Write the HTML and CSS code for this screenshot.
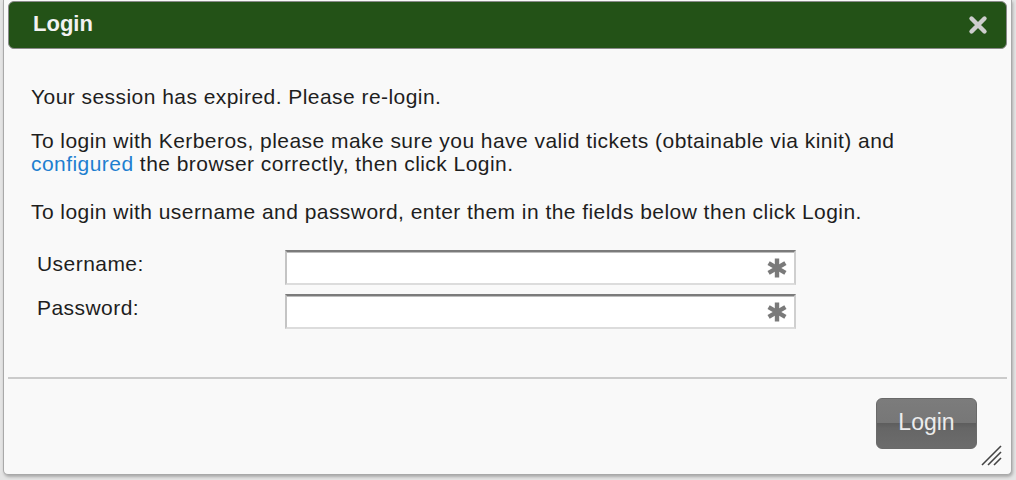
FILE: index.html
```html
<!DOCTYPE html>
<html>
<head>
<meta charset="utf-8">
<link rel="stylesheet" href="styles.css">
</head>
<body>
<div class="dialog">
  <div class="titlebar">
    <span class="title">Login</span>
    <svg class="close" width="20" height="20" viewBox="0 0 20 20"><path d="M3.5 3.5 L16.5 16.5 M16.5 3.5 L3.5 16.5" stroke="#cdcdcd" stroke-width="4.4" stroke-linecap="round"/></svg>
  </div>
  <div class="content">
    <p class="p1">Your session has expired. Please re-login.</p>
    <p class="p2">To login with Kerberos, please make sure you have valid tickets (obtainable via kinit) and <a class="link">configured</a> the browser correctly, then click Login.</p>
    <p class="p3">To login with username and password, enter them in the fields below then click Login.</p>
    <div class="form">
      <div class="row">
        <label class="lbl">Username:</label>
        <div class="field"><svg class="req" width="22" height="22" viewBox="0 0 22 22"><g stroke="#7a7a7a" stroke-width="4.4" stroke-linecap="butt"><path d="M11 1.5 V20.5"/><path d="M2.6 6.2 L19.4 15.8"/><path d="M19.4 6.2 L2.6 15.8"/></g></svg></div>
      </div>
      <div class="row">
        <label class="lbl">Password:</label>
        <div class="field"><svg class="req" width="22" height="22" viewBox="0 0 22 22"><g stroke="#7a7a7a" stroke-width="4.4" stroke-linecap="butt"><path d="M11 1.5 V20.5"/><path d="M2.6 6.2 L19.4 15.8"/><path d="M19.4 6.2 L2.6 15.8"/></g></svg></div>
      </div>
    </div>
  </div>
  <div class="footer">
    <button class="btn">Login</button>
    <svg class="grip" width="22" height="22" viewBox="0 0 22 22"><g stroke="#444" stroke-width="1.6"><path d="M2 21 L21 2"/><path d="M8 21 L21 8"/><path d="M14 21 L21 14"/></g></svg>
  </div>
</div>
</body>
</html>
```
FILE: styles.css
```css
html, body {
  margin: 0;
  padding: 0;
  background: #e4e4e4;
  width: 1016px;
  height: 480px;
  overflow: hidden;
  font-family: "Liberation Sans", Arial, Helvetica, sans-serif;
}
.dialog {
  margin-left: 3px;
  width: 1009px;
  height: 475px;
  background: #f9f9f9;
  border: 1px solid #a9a9a9;
  border-top: none;
  border-radius: 0 0 5px 5px;
  box-shadow: 1px 2px 3px rgba(0,0,0,0.25);
  padding: 1px 4px 0 4px;
  box-sizing: border-box;
  display: flex;
  flex-direction: column;
  position: relative;
}
.titlebar {
  height: 48px;
  box-sizing: border-box;
  background: #235217;
  border: 1px solid #8a8a8a;
  border-radius: 6px;
  display: flex;
  align-items: center;
  justify-content: space-between;
  padding: 0 18px 0 24px;
}
.title {
  color: #f2f2f2;
  font-weight: bold;
  font-size: 22px;
  margin-top: -2px;
}
.close { margin-top: -1px; }
.content {
  padding: 0 0 0 23px;
  height: 330px;
  border-bottom: 2px solid #cbcbcb;
  box-sizing: border-box;
  color: #1e1e1e;
  font-size: 21px;
  letter-spacing: 0.45px;
  line-height: 23px;
}
.content p { margin: 0; padding-right: 90px; }
.p1 { padding-top: 36px; }
.p2 { padding-top: 21px; }
.p3 { padding-top: 25px; }
.link { color: #1e7fd0; text-decoration: none; }
.form {
  padding-top: 27px;
  padding-left: 6px;
  display: flex;
  flex-direction: column;
  gap: 9px;
}
.row {
  display: flex;
  align-items: flex-start;
}
.lbl {
  width: 248px;
  padding-top: 2px;
}
.field {
  width: 511px;
  height: 35px;
  box-sizing: border-box;
  background: #fff;
  border-top: 2px solid #7b7b7b;
  border-left: 2px solid #c4c4c4;
  border-right: 2px solid #cfcfcf;
  border-bottom: 2px solid #dcdcdc;
  box-shadow: inset 0 1px 0 #bdbdbd;
  display: flex;
  justify-content: flex-end;
  align-items: center;
  padding-right: 6px;
}
.footer {
  flex: 1;
  display: flex;
  justify-content: flex-end;
  align-items: flex-start;
  padding-top: 19px;
  padding-right: 30px;
}
.btn {
  width: 101px;
  height: 51px;
  border: 1px solid #6a6a6a;
  border-radius: 6px;
  background: linear-gradient(to bottom, #7c7c7c 0%, #777 48%, #5e5e5e 50%, #666 60%, #6c6c6c 100%);
  color: #ececec;
  font-family: "Liberation Sans", Arial, Helvetica, sans-serif;
  font-size: 23px;
  padding: 0 0 2px 0;
}
.grip {
  position: absolute;
  right: 9px;
  bottom: 8px;
}
```
